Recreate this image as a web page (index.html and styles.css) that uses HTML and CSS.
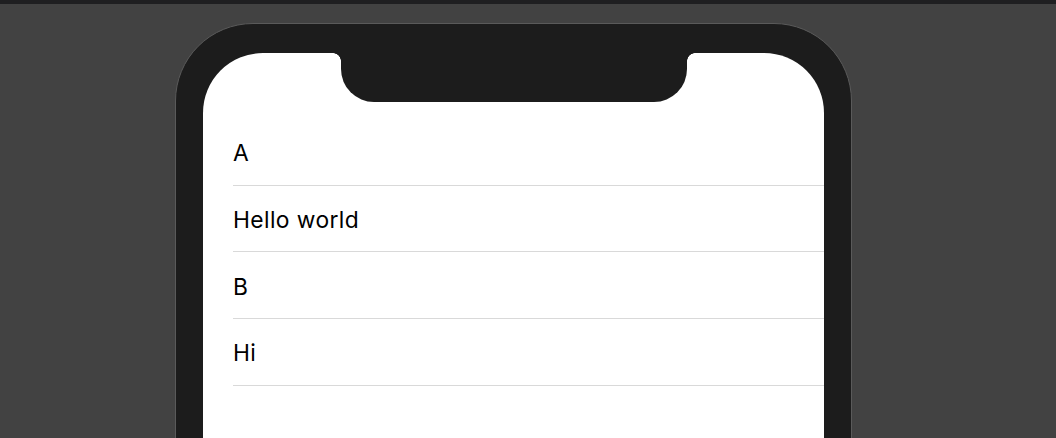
FILE: index.html
```html
<!DOCTYPE html>
<html>
<head>
<meta charset="utf-8">
<link rel="stylesheet" href="styles.css">
</head>
<body>
<div class="topbar"></div>
<div class="stage">
  <div class="phone">
    <div class="screen">
      <div class="notch"></div>
      <ul class="list">
        <li class="row">A</li>
        <li class="row">Hello world</li>
        <li class="row">B</li>
        <li class="row">Hi</li>
      </ul>
    </div>
  </div>
</div>
</body>
</html>
```
FILE: styles.css
```css
html, body {
  margin: 0;
  padding: 0;
}
body {
  background: #424242;
  font-family: Inter, "Liberation Sans", sans-serif;
}
.topbar {
  height: 4px;
  background: #1f1f21;
}
.stage {
  box-sizing: border-box;
  height: 434px;
  overflow: hidden;
  padding: 19px 0 0 175px;
}
.phone {
  box-sizing: border-box;
  width: 677px;
  height: 640px;
  background: #1c1c1c;
  border: 1px solid #5a5a5a;
  border-radius: 78px;
  padding: 29px 27px 27px 27px;
}
.screen {
  position: relative;
  width: 621px;
  height: 560px;
  background: #fff;
  border-radius: 60px;
  padding-top: 66px;
  box-sizing: border-box;
}
.notch {
  position: absolute;
  top: 0;
  left: 138px;
  width: 346px;
  height: 49px;
  background: #1c1c1c;
  border-radius: 0 0 33px 33px;
}
.notch::before,
.notch::after {
  content: "";
  position: absolute;
  top: 0;
  width: 8px;
  height: 8px;
}
.notch::before {
  left: -8px;
  background: radial-gradient(circle at 0 100%, transparent 7.5px, #1c1c1c 8px);
}
.notch::after {
  right: -8px;
  background: radial-gradient(circle at 100% 100%, transparent 7.5px, #1c1c1c 8px);
}
.list {
  list-style: none;
  margin: 0 0 0 30px;
  padding: 0;
}
.row {
  box-sizing: border-box;
  height: 66.67px;
  display: flex;
  align-items: center;
  font-size: 22.8px;
  letter-spacing: 0.4px;
  color: #000;
  border-bottom: 1px solid #d9d9d9;
  padding-top: 2px;
}
```
